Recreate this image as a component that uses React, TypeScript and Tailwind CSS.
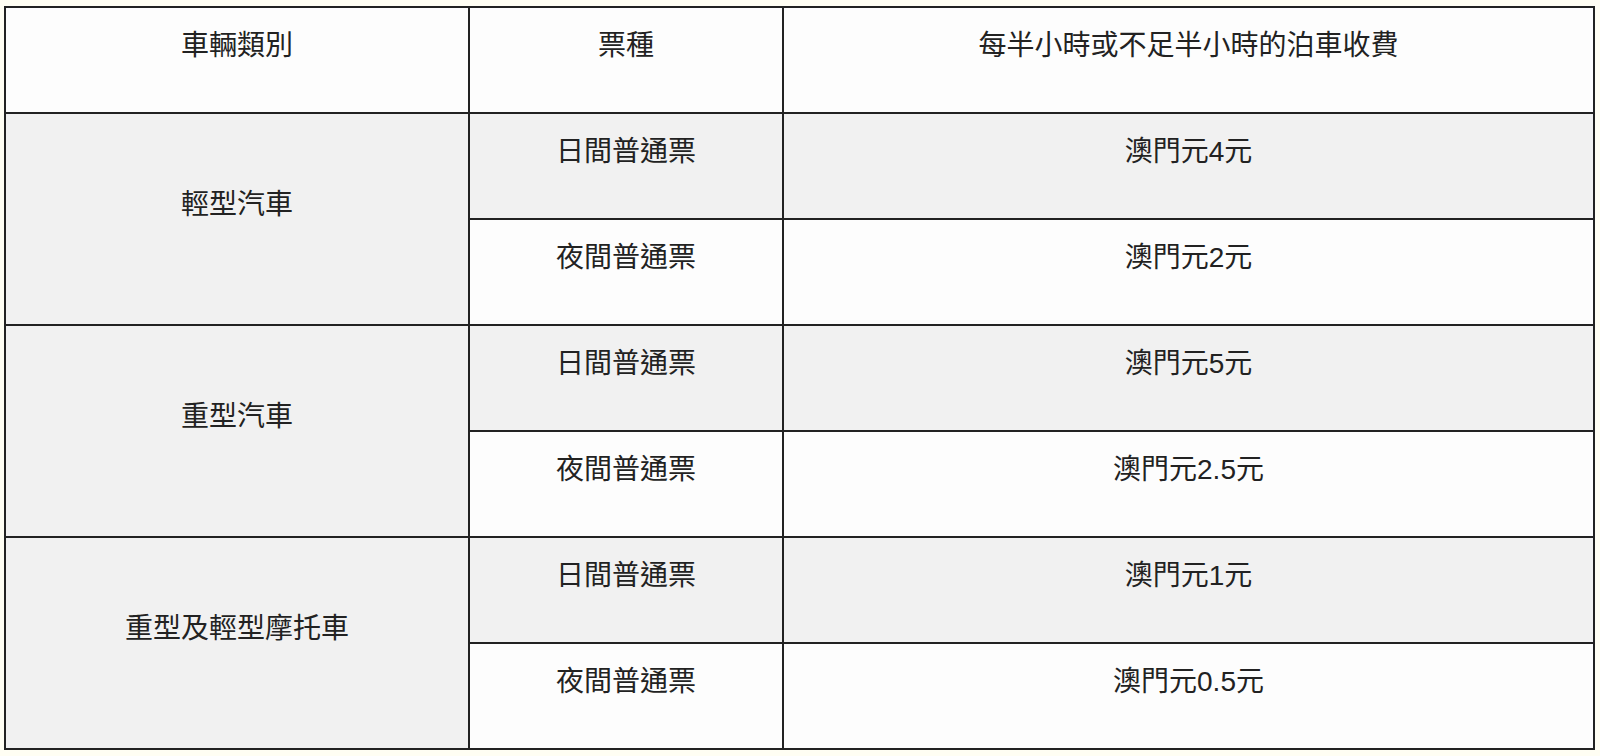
const GROUPS = [
  { type: "輕型汽車", day: "澳門元4元", night: "澳門元2元" },
  { type: "重型汽車", day: "澳門元5元", night: "澳門元2.5元" },
  { type: "重型及輕型摩托車", day: "澳門元1元", night: "澳門元0.5元" },
];

const cell =
  "border-2 border-[#222222] text-center align-middle pt-[19px] pb-[47px] leading-[38px]";

export default function App() {
  return (
    <div
      className="min-h-screen bg-[#fffef3] pt-[6px] pl-[4px] text-[28px] text-[#222222]"
      style={{ fontFamily: '"Liberation Sans", "Noto Sans CJK TC", sans-serif' }}
    >
      <table className="table-fixed border-collapse w-[1589px]">
        <colgroup>
          <col className="w-[464px]" />
          <col className="w-[314px]" />
          <col className="w-[811px]" />
        </colgroup>
        <thead>
          <tr className="bg-[#fdfdfd]">
            <th className={`${cell} font-normal`}>車輛類別</th>
            <th className={`${cell} font-normal`}>票種</th>
            <th className={`${cell} font-normal`}>每半小時或不足半小時的泊車收費</th>
          </tr>
        </thead>
        <tbody>
          {GROUPS.map((g) => (
            <>
              <tr key={g.type + "-day"} className="bg-[#f1f1f1]">
                <td rowSpan={2} className={cell}>
                  {g.type}
                </td>
                <td className={cell}>日間普通票</td>
                <td className={cell}>{g.day}</td>
              </tr>
              <tr key={g.type + "-night"} className="bg-[#fdfdfd]">
                <td className={cell}>夜間普通票</td>
                <td className={cell}>{g.night}</td>
              </tr>
            </>
          ))}
        </tbody>
      </table>
    </div>
  );
}
